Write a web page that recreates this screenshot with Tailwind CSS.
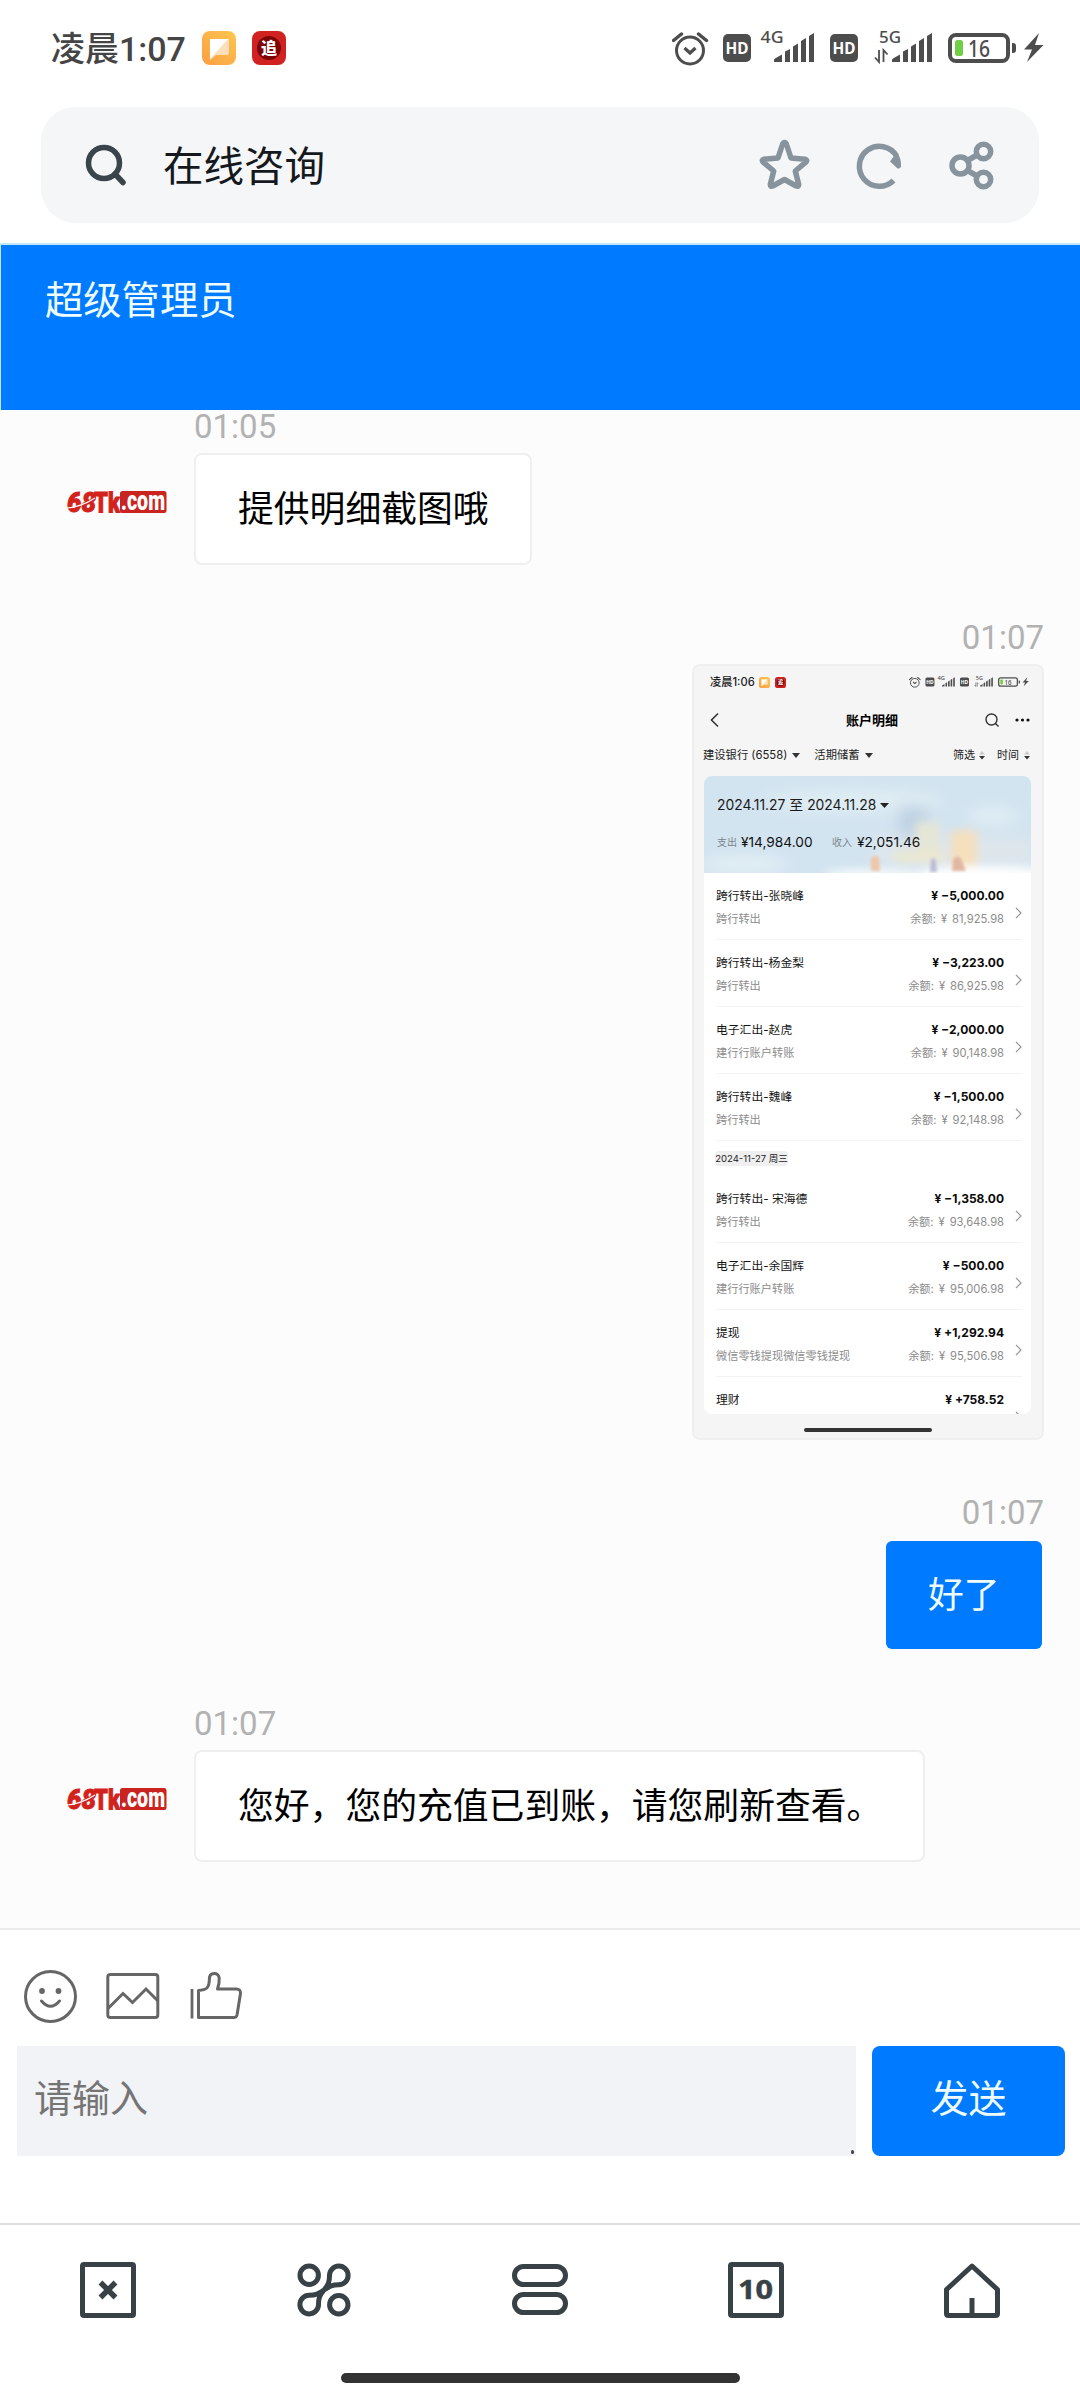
<!DOCTYPE html>
<html lang="zh-CN">
<head>
<meta charset="utf-8">
<title>在线咨询</title>
<script src="https://cdn.jsdelivr.net/npm/@tailwindcss/browser@4"></script>
</head>
<body class="w-[1080px] h-[2400px] overflow-hidden bg-white flex flex-col font-['Roboto','Noto_Sans_CJK_SC',sans-serif]">

<svg width="0" height="0" class="absolute">
  <defs>
    <linearGradient id="or" x1="0" y1="1" x2="1" y2="0"><stop offset="0" stop-color="#fb9f42"/><stop offset="1" stop-color="#fdc64f"/></linearGradient>
    <symbol id="note" viewBox="0 0 34 34"><rect width="34" height="34" rx="8" fill="url(#or)"/><path d="M8 8h19v13.500l-1 2.500H14l-6 5z" fill="#fde0bb"/><path d="M8 8h18L8 28z" fill="#fff"/></symbol>
    <symbol id="zhui" viewBox="0 0 34 34"><rect width="34" height="34" rx="8" fill="#d12222"/><circle cx="17" cy="17" r="12" fill="#7d0508"/><text x="17" y="23" text-anchor="middle" font-size="16" font-weight="900" fill="#fff" font-family="Noto Sans CJK SC, sans-serif">追</text></symbol>
    <symbol id="sys" viewBox="0 0 372 36">
      <g fill="none" stroke="#4d4d4d" stroke-width="3"><circle cx="18" cy="20.500" r="13.500"/><path d="M12.500 18l5.500 5 5.500-5" stroke-width="3.200"/><path d="M1.500 10.500l8-6.500M34.500 10.500l-8-6.500" stroke-width="3.500" stroke-linecap="round"/></g>
      <rect x="51" y="4" width="28" height="28" rx="5" fill="#4d4d4d"/><text x="65" y="23.500" font-size="16.500" font-weight="700" text-anchor="middle" fill="#fff" font-family="Noto Sans" textLength="23" lengthAdjust="spacingAndGlyphs">HD</text>
      <text x="88.500" y="13" font-size="16.500" font-weight="500" fill="#4d4d4d" font-family="Noto Sans" textLength="23" lengthAdjust="spacingAndGlyphs">4G</text>
      <path id="bars" d="M102 32v-2q0-1 1-1.500l7-4V32zM113 32V21.500l5-2.500V32zM121 32V16.500l5-3V32zM129 32V11l5-3V32zM137 32V6l5-3V32z" fill="#4d4d4d"/>
      <rect x="158" y="4" width="28" height="28" rx="5" fill="#4d4d4d"/><text x="172" y="23.500" font-size="16.500" font-weight="700" text-anchor="middle" fill="#fff" font-family="Noto Sans" textLength="23" lengthAdjust="spacingAndGlyphs">HD</text>
      <text x="207" y="13" font-size="16.500" font-weight="500" fill="#4d4d4d" font-family="Noto Sans" textLength="22" lengthAdjust="spacingAndGlyphs">5G</text>
      <path d="M207 20v12l-4-4.500M211.500 32V20l4 4.500" fill="none" stroke="#4d4d4d" stroke-width="1.800"/>
      <use href="#bars" x="118"/>
      <rect x="278" y="5" width="58" height="26" rx="6" fill="none" stroke="#4d4d4d" stroke-width="4"/><rect x="283" y="10" width="8" height="16" rx="2.500" fill="#71cf45"/>
      <text x="296" y="26.500" font-size="23" font-weight="500" fill="#4d4d4d" font-family="Noto Sans" textLength="22" lengthAdjust="spacingAndGlyphs">16</text>
      <path d="M340 13h1q3 0 3 3v4q0 3-3 3h-1z" fill="#4d4d4d"/>
      <path d="M367 3l-15 16.500h8L355 32l16.500-17h-8.500z" fill="#4d4d4d"/>
    </symbol>
    <symbol id="logo" viewBox="0 0 100 22">
      <rect x="53" y="0" width="46.500" height="22" rx="2.500" fill="#c9241f"/>
      <text x="0" y="21" font-family="Roboto" font-weight="900" font-style="italic" font-size="28" fill="#d3221c" stroke="#d3221c" stroke-width="1" textLength="29" lengthAdjust="spacingAndGlyphs">68</text>
      <text x="27" y="21.500" font-family="Roboto" font-weight="900" font-size="29" fill="#d3221c" stroke="#d3221c" stroke-width="1" textLength="26" lengthAdjust="spacingAndGlyphs">Tk</text>
      <text x="54" y="19" font-family="Roboto" font-weight="900" font-size="28" fill="#fff" textLength="44" lengthAdjust="spacingAndGlyphs">.com</text>
      <path d="M0 17q14-1 28-10" stroke="#fcfcfc" stroke-width="1.100" fill="none"/>
    </symbol>
  </defs>
</svg>

<!-- status bar -->
<div class="h-[107px] shrink-0 flex items-start pl-[51px] pr-[36px] pt-[30px]">
  <div class="text-[34px] leading-[38px] font-medium text-[#454545] w-[151px] whitespace-nowrap">凌晨1:07</div>
  <svg class="w-[34px] h-[34px] mt-px"><use href="#note"/></svg>
  <svg class="w-[34px] h-[34px] ml-4 mt-px"><use href="#zhui"/></svg>
  <svg class="w-[372px] h-[36px] ml-auto"><use href="#sys"/></svg>
</div>

<!-- address bar -->
<div class="mx-[41px] h-[116px] shrink-0 rounded-[34px] bg-[#f4f6f8] flex items-center pl-[43px] pr-[45px]">
  <svg class="w-[44px] h-[44px]" viewBox="0 0 44 44" fill="none" stroke="#39444b" stroke-width="5.500" stroke-linecap="round"><circle cx="20" cy="20" r="15.500"/><path d="M31 31l8 8.500"/></svg>
  <div class="ml-[35px] pt-1 text-[40.5px] leading-[48px] text-[#15181c]">在线咨询</div>
  <svg class="w-[236px] h-[52px] ml-auto mb-0.5" viewBox="0 0 236 52" fill="none" stroke="#87949d" stroke-width="5.500">
    <path d="M26.500 4.500Q28 4.500 28.700 7l4.300 13 14 1.200q3 .8.800 3L37.300 33l3.400 13.500q0 2.500-2.500 1.500L26.500 41.500 14.800 48q-2.500 1-2.500-1.500L15.700 33 5.200 24.200q-2.200-2.200.8-3L20 20l4.300-13q.7-2.500 2.200-2.500z" stroke-linejoin="round"/>
    <path d="M135.500 42.500A20 20 0 1 1 138.500 18"/><path d="M139.500 15q4 6 3.500 13.500-.5 2.500-3.500 2l-7.500-7q3-5 7.500-8.500z" fill="#87949d" stroke="none"/>
    <circle cx="202.500" cy="27.500" r="8.500"/><circle cx="225.500" cy="13.500" r="7.200"/><circle cx="225.500" cy="41.500" r="7.200"/><path d="M209.500 22.500l9.500-5.500M209.500 32.500l9.500 5.500"/>
  </svg>
</div>

<!-- chat header -->
<div class="mt-[20px] h-[167px] shrink-0 bg-[#007aff] border-t-2 border-l border-[#c1e7f5] pl-[44px] pt-[33px]">
  <div class="text-[38.3px] leading-[46px] text-[#effdff]">超级管理员</div>
</div>

<!-- conversation -->
<div class="h-[1518px] shrink-0 bg-[#fcfcfc] flex flex-col pr-[36px] text-[35.8px]">
  <div class="flex flex-col items-start pl-[194px]">
    <div class="h-[43px] leading-[34px] text-[33px] text-[#b2b2b2]">01:05</div>
    <div class="relative h-[112px] w-[338px] rounded-lg border-2 border-[#efefef] bg-white flex items-center pl-[42px] pt-1 text-black whitespace-nowrap">提供明细截图哦
      <svg class="absolute -left-[129px] top-[36px] w-[100px] h-[22px]"><use href="#logo"/></svg>
    </div>
  </div>

  <div class="mt-[56px] flex flex-col items-end">
    <div class="h-[43px] leading-[34px] text-[33px] text-[#b2b2b2]">01:07</div>
    <div class="w-[352px] h-[776px] rounded-lg border-2 border-[#efefef] bg-[#f5f5f5] overflow-hidden flex flex-col px-[10px] text-[11px] leading-[16px] font-['Inter','Noto_Sans_CJK_SC',sans-serif] text-[#222] whitespace-nowrap">
      <div class="mt-[8px] h-[16px] flex items-center pl-[6px]">
        <span class="text-[11.2px] font-medium w-[49px]">凌晨1:06</span>
        <svg class="w-[11px] h-[11px]"><use href="#note"/></svg>
        <svg class="w-[11px] h-[11px] ml-[5px]"><use href="#zhui"/></svg>
        <svg class="w-[120px] h-[12px] ml-auto mr-[3px]"><use href="#sys"/></svg>
      </div>
      <div class="mt-[20px] h-[20px] flex items-center pl-[6px] pr-[2px]">
        <svg class="w-[9px] h-[16px]" viewBox="0 0 9 16" fill="none" stroke="#333" stroke-width="1.600"><path d="M8 1.500L1.500 8 8 14.500"/></svg>
        <span class="ml-[127px] text-[13px] font-bold text-black">账户明细</span>
        <svg class="w-[14px] h-[14px] ml-auto" viewBox="0 0 14 14" fill="none" stroke="#333" stroke-width="1.400"><circle cx="6.500" cy="6.500" r="5.500"/><path d="M10.500 10.500l3 3"/></svg>
        <svg class="w-[15px] h-[4px] ml-[16px]" viewBox="0 0 15 4" fill="#111"><circle cx="2" cy="2" r="1.600"/><circle cx="7.500" cy="2" r="1.600"/><circle cx="13" cy="2" r="1.600"/></svg>
      </div>
      <div class="mt-[17px] h-[16px] flex items-center pr-[2px] -ml-px">
        <span class="text-[11.3px]">建设银行 (6558)</span>
        <svg class="w-[8px] h-[5px] ml-[5px]" viewBox="0 0 8 5"><path d="M0 0h8L4 5z" fill="#333"/></svg>
        <span class="ml-[14px] text-[11.3px]">活期储蓄</span>
        <svg class="w-[8px] h-[5px] ml-[5px]" viewBox="0 0 8 5"><path d="M0 0h8L4 5z" fill="#333"/></svg>
        <span class="ml-auto">筛选</span>
        <svg class="w-[6px] h-[9px] ml-[4px]" viewBox="0 0 6 9"><path d="M0 3.500h6L3 0z" fill="#ccc"/><path d="M0 5h6L3 8.500z" fill="#333"/></svg>
        <span class="ml-[12px]">时间</span>
        <svg class="w-[6px] h-[9px] ml-[5px]" viewBox="0 0 6 9"><path d="M0 3.500h6L3 0z" fill="#ccc"/><path d="M0 5h6L3 8.500z" fill="#333"/></svg>
      </div>
      <div class="mt-[13px] w-[327px] h-[638px] shrink-0 rounded-lg bg-white overflow-hidden">
        <div class="relative h-[97px] bg-[#d2e4f0] pt-[20px] pl-[13px]">
          <svg class="absolute left-0 top-0 w-[327px] h-[97px]" viewBox="0 0 327 97">
            <defs><filter id="b1" x="-50%" y="-50%" width="200%" height="200%"><feGaussianBlur stdDeviation="4"/></filter><filter id="b2" x="-30%" y="-30%" width="160%" height="160%"><feGaussianBlur stdDeviation="7"/></filter><filter id="b3" x="-50%" y="-50%" width="200%" height="200%"><feGaussianBlur stdDeviation="1.800"/></filter></defs>
            <g filter="url(#b2)"><ellipse cx="150" cy="25" rx="90" ry="12" fill="#dfecf3"/><ellipse cx="40" cy="88" rx="45" ry="8" fill="#e3eff5"/><rect x="195" y="30" width="28" height="40" fill="#bfd3e3"/><ellipse cx="290" cy="40" rx="26" ry="9" fill="#e0edf4"/><rect x="170" y="62" width="157" height="26" fill="#dfe6ec"/></g>
            <g filter="url(#b1)"><rect x="212" y="46" width="24" height="36" fill="#e6e6d6"/><rect x="247" y="54" width="26" height="36" fill="#f5dfbd"/><rect x="190" y="76" width="50" height="10" fill="#ece8cf"/><ellipse cx="170" cy="98" rx="50" ry="4" fill="#fff"/><ellipse cx="280" cy="98" rx="70" ry="8" fill="#fff"/></g>
            <g filter="url(#b3)"><path d="M167 82q5-4 8 0l1 13h-9z" fill="#eec6a8"/><path d="M249 83q6-6 9 2l4 10h-14z" fill="#e0b8a2"/><path d="M227 83q4-2 5 2l1 11h-7z" fill="#bdbcd6"/></g>
          </svg>
          <div class="relative flex items-center h-[18px] text-[13.9px] text-[#1a1a1a]">2024.11.27 至 2024.11.28<svg class="w-[9px] h-[5px] ml-[4px]" viewBox="0 0 9 5"><path d="M0 0h9L4.500 5z" fill="#222"/></svg></div>
          <div class="relative flex items-center h-[18px] mt-[19px] text-[10px] text-[#7a858d]"><span class="w-[24px]">支出</span><span class="text-[13.7px] text-[#111] w-[91px]">¥14,984.00</span><span class="w-[25px]">收入</span><span class="text-[13.7px] text-[#111]">¥2,051.46</span></div>
        </div>
        <div id="list"></div>
      </div>
      <div class="mt-[14px] mx-auto w-[128px] h-[4px] rounded-full bg-[#333]"></div>
    </div>
  </div>

  <div class="mt-[56px] flex flex-col items-end">
    <div class="h-[45px] leading-[34px] text-[33px] text-[#b2b2b2]">01:07</div>
    <div class="mr-[2px] w-[156px] h-[108px] rounded-md bg-[#007aff] text-[#effdff] flex items-center pl-[42px] pt-1 whitespace-nowrap">好了</div>
  </div>

  <div class="mt-[58px] flex flex-col items-start pl-[194px]">
    <div class="h-[43px] leading-[34px] text-[33px] text-[#b2b2b2]">01:07</div>
    <div class="relative h-[112px] w-[731px] rounded-lg border-2 border-[#efefef] bg-white flex items-center pl-[42px] pt-1 text-black whitespace-nowrap">您好，您的充值已到账，请您刷新查看。
      <svg class="absolute -left-[129px] top-[36px] w-[100px] h-[22px]"><use href="#logo"/></svg>
    </div>
  </div>
</div>

<!-- composer -->
<div class="h-[295px] shrink-0 border-t-2 border-[#ebebeb] bg-white">
  <svg class="block w-[230px] h-[56px] ml-[20px] mt-[39px]" viewBox="20 1969 230 56" fill="none" stroke="#666" stroke-width="3">
    <circle cx="50.500" cy="1996.500" r="25"/><circle cx="42" cy="1991" r="2.900" fill="#666" stroke="none"/><circle cx="58.500" cy="1991" r="2.900" fill="#666" stroke="none"/><path d="M41.500 2001q9 10.500 18 0" stroke-linecap="round"/>
    <rect x="107.800" y="1974.500" width="50" height="43" rx="2.500"/><path d="M108 2008.500l15-15 9.500 9 13.500-13.500 12 12"/>
    <path d="M192 1989v29.500" stroke-width="2.800"/>
    <path d="M198.500 1990.500v27h35.500q2.500 0 3-2.500l3.500-21.500q.2-4.500-4-4.500h-19q2-6 1.700-11-.8-4.500-5-4.500-4.500 0-4.800 5 0 7-2.500 9.500-2.200 2-8.400 2.500z" stroke-linejoin="round"/>
  </svg>
  <div class="mt-[21px] ml-[17px] flex">
    <div class="relative w-[839px] h-[110px] bg-[#f2f3f7] pl-[17px] pt-[30px] text-[38px] leading-[46px] text-[#757575]">请输入<span class="absolute right-[2.500px] bottom-[2px] w-[3px] h-[4px] rounded-full bg-[#444]"></span></div>
    <div class="ml-[16px] w-[193px] h-[110px] rounded-lg bg-[#007aff] text-[#effdff] text-[38px] leading-[46px] pt-[30px] text-center">发送</div>
  </div>
</div>

<!-- browser toolbar -->
<div class="h-[177px] shrink-0 border-t-2 border-[#dedede] bg-white">
  <div class="mt-[35px] grid grid-cols-5 justify-items-center">
    <svg class="w-[60px] h-[60px]" viewBox="0 0 60 60" fill="none" stroke="#374146"><rect x="4.500" y="4.500" width="51" height="51" rx="1.500" stroke-width="5"/><path d="M22.500 22.500l15 15M37.500 22.500l-15 15" stroke-width="5.500"/></svg>
    <svg class="w-[60px] h-[60px]" viewBox="0 0 60 60" fill="none" stroke="#374146" stroke-width="5"><circle cx="15.200" cy="15.200" r="9.200"/><circle cx="44.800" cy="44.800" r="9.200"/><path d="M30 30C34.500 24.500 35.500 22 35.500 15.500a9.300 9.300 0 1 1 9.300 9.200C38.500 24.700 35.500 26 30 30S21.500 35.300 15.200 35.300a9.300 9.300 0 1 0 9.300 9.200C24.500 38 25.500 35.500 30 30z"/></svg>
    <svg class="w-[60px] h-[60px]" viewBox="0 0 60 60" fill="none" stroke="#374146" stroke-width="5"><rect x="4.500" y="6.500" width="51" height="18" rx="9"/><rect x="4.500" y="34.500" width="51" height="18" rx="9"/></svg>
    <svg class="w-[60px] h-[60px]" viewBox="0 0 60 60" fill="none" stroke="#374146"><rect x="4.500" y="4.500" width="51" height="51" rx="1.500" stroke-width="5"/><text x="29.500" y="38.500" text-anchor="middle" font-size="27" font-weight="700" font-family="Noto Sans" fill="#374146" stroke="#374146" stroke-width=".5" textLength="35" lengthAdjust="spacingAndGlyphs">10</text></svg>
    <svg class="w-[60px] h-[60px]" viewBox="0 0 60 60" fill="none" stroke="#374146" stroke-width="5"><path d="M30 6L4.500 29.500v24q0 2 2 2h47q2 0 2-2v-24z" stroke-linejoin="round"/><path d="M30 38v17"/></svg>
  </div>
  <div class="mt-[53px] mx-auto w-[399px] h-[10px] rounded-full bg-[#333]"></div>
</div>

<script>
const chev = `<svg class="w-[7px] h-[12px] ml-[11px] mt-[34px]" viewBox="0 0 7 12" fill="none" stroke="#999" stroke-width="1.200"><path d="M1 1l5 5-5 5"/></svg>`;
const row = ([t, s, a, b]) => `<div class="ml-[12px] mr-[9px] h-[67px] border-b border-[#f3f3f3] flex items-start">
  <div class="flex-1 pt-[15px]"><div class="text-[11.8px] leading-[16px] text-[#151515]">${t}</div>${s && `<div class="mt-[7px] text-[11.2px] leading-[16px] text-[#8c8c8c]">${s}</div>`}</div>
  <div class="text-right pt-[15px]"><div class="text-[12px] leading-[16px] font-bold text-[#0a0a0a]">¥ ${a}</div>${b && `<div class="mt-[7px] text-[11.2px] leading-[16px] word-spacing text-[#8c8c8c]">余额:<span class="ml-[5px] mr-[5px]">¥</span>${b}</div>`}</div>${chev}</div>`;
const first = [['跨行转出-张晓峰','跨行转出','−5,000.00','81,925.98'],['跨行转出-杨金梨','跨行转出','−3,223.00','86,925.98'],['电子汇出-赵虎','建行行账户转账','−2,000.00','90,148.98'],['跨行转出-魏峰','跨行转出','−1,500.00','92,148.98']];
const second = [['跨行转出- 宋海德','跨行转出','−1,358.00','93,648.98'],['电子汇出-余国辉','建行行账户转账','−500.00','95,006.98'],['提现','微信零钱提现微信零钱提现','+1,292.94','95,506.98'],['理财','','+758.52','']];
document.getElementById('list').innerHTML = first.map(row).join('') +
  `<div class="h-[35px] pt-[10px] pl-[11px]"><div class="w-[73px] h-[15px] rounded-sm bg-[#efefef] text-[9.5px] leading-[15px] text-center text-[#222]">2024-11-27 周三</div></div>` +
  second.map(row).join('');
</script>
</body>
</html>
